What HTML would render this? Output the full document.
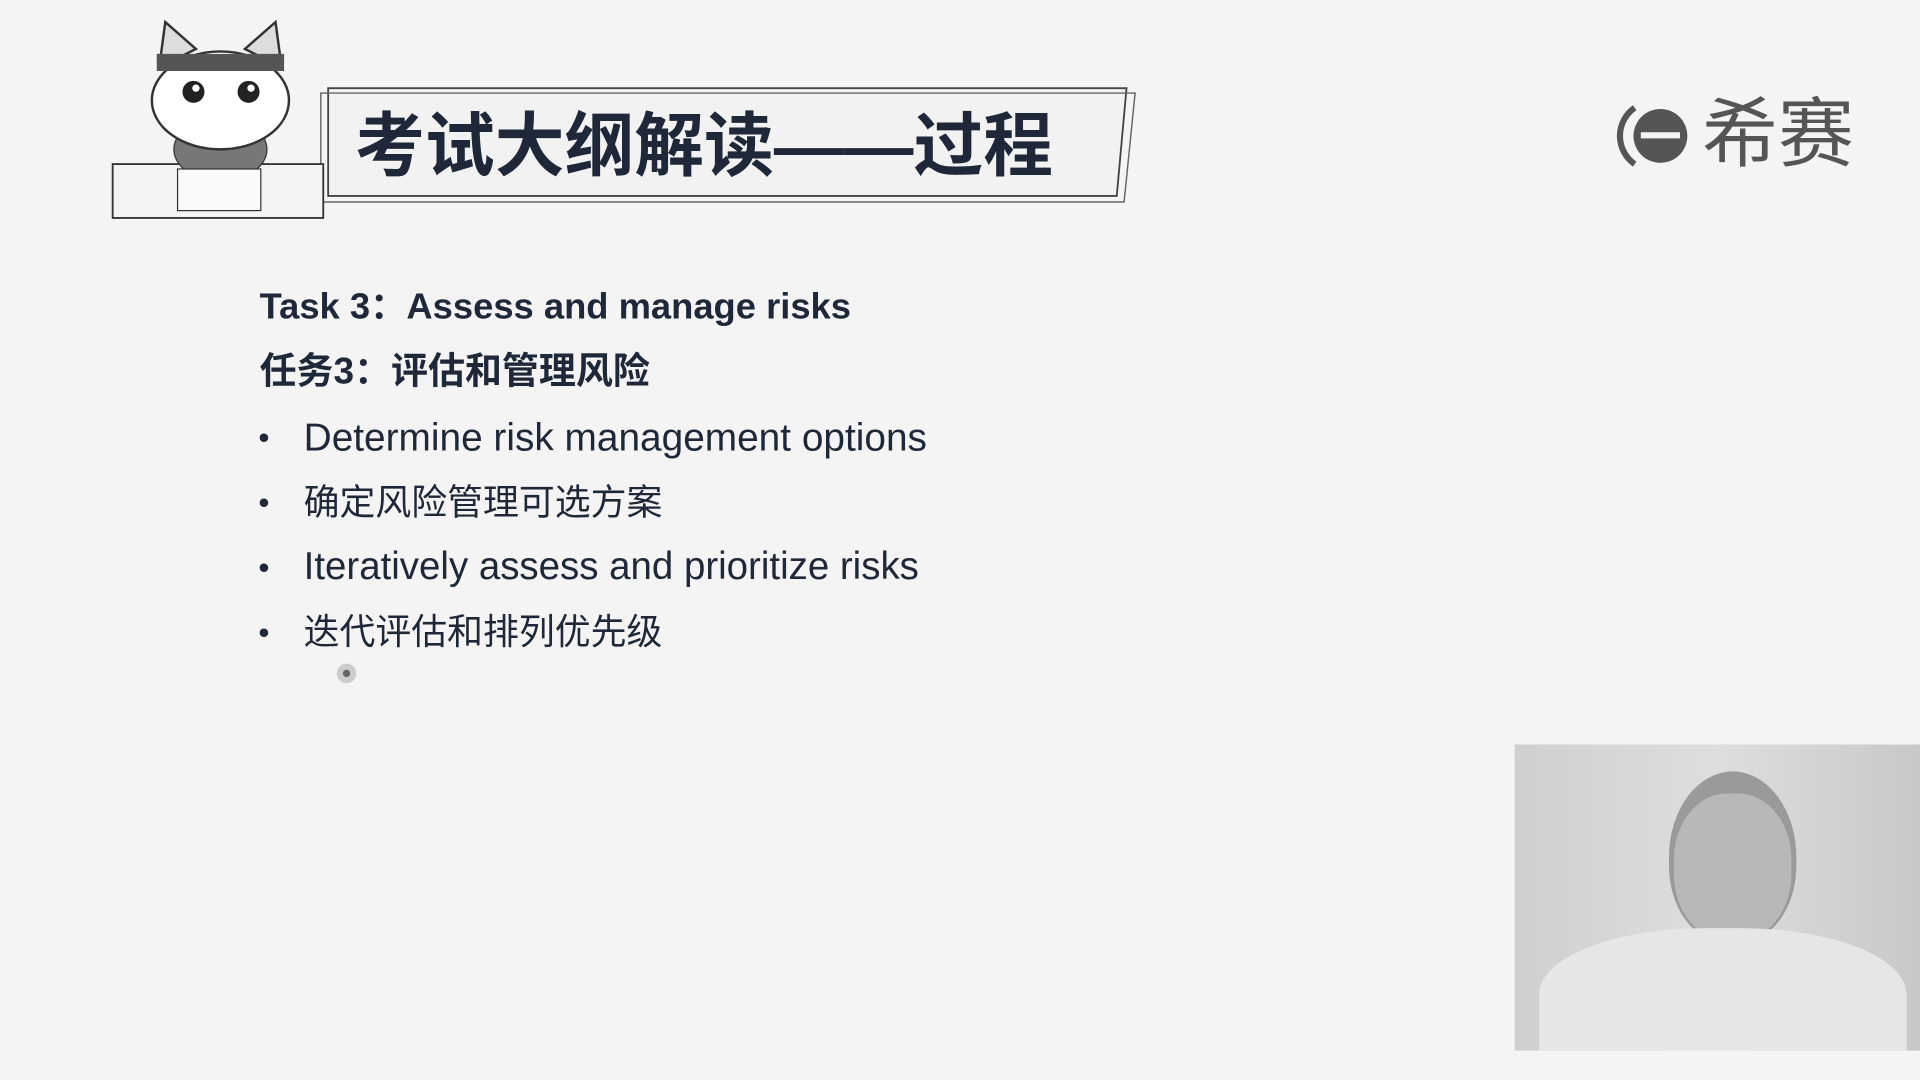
<!DOCTYPE html>
<html><head><meta charset="utf-8"><style>
html,body{margin:0;padding:0;width:1920px;height:1080px;overflow:hidden;background:#f4f4f4}
#s{position:absolute;left:0;top:0;width:1568px;height:882px;transform:scale(1.22449);transform-origin:0 0;font-family:"Liberation Sans","Noto Sans CJK SC",sans-serif;color:#1e2838}
.t{position:absolute;white-space:nowrap;line-height:30px}
.d{position:absolute;left:211px;font-size:26px;line-height:30px}
</style></head><body><div id="s">
<svg width="1568" height="882" style="position:absolute;left:0;top:0">
<polygon points="268,72 920,72 912,160 268,160" fill="#f2f2f2" stroke="#444" stroke-width="1.5"/>
<polygon points="262,76 927,76 918,165 262,165" fill="none" stroke="#666" stroke-width="1.2"/>
<rect x="92" y="134" width="172" height="44" fill="#f4f4f4" stroke="#333" stroke-width="1.5"/>
<ellipse cx="180" cy="122" rx="38" ry="26" fill="#777" stroke="#333"/>
<rect x="145" y="138" width="68" height="34" fill="#fafafa" stroke="#333"/>
<ellipse cx="180" cy="82" rx="56" ry="40" fill="#fff" stroke="#333" stroke-width="2"/>
<polygon points="130,55 135,18 160,40" fill="#ddd" stroke="#333" stroke-width="2"/>
<polygon points="230,55 225,18 200,40" fill="#ddd" stroke="#333" stroke-width="2"/>
<rect x="128" y="44" width="104" height="14" fill="#555"/>
<circle cx="158" cy="75" r="9" fill="#222"/><circle cx="203" cy="75" r="9" fill="#222"/>
<circle cx="160" cy="72" r="3" fill="#fff"/><circle cx="205" cy="72" r="3" fill="#fff"/>
<circle cx="283" cy="550" r="8" fill="#ccc"/><circle cx="283" cy="550" r="3" fill="#666"/>
<path d="M1335,88 A28,28 0 0 0 1335,134" fill="none" stroke="#555" stroke-width="5"/>
<circle cx="1356" cy="111" r="22" fill="#555"/>
<rect x="1340" y="108" width="32" height="5" fill="#f4f4f4"/>
</svg>
<div class="t" style="left:290px;top:85px;line-height:70px;font-size:57px;font-weight:bold;color:#1e2838">考试大纲解读——过程</div>
<div class="t" style="left:1390px;top:78px;line-height:66px;font-size:62px;color:#555">希赛</div>
<div class="t" style="left:212px;top:236px;font-size:29.7px;font-weight:600">Task 3：Assess and manage risks</div>
<div class="t" style="left:212px;top:289px;font-size:30.2px;font-weight:600">任务3：评估和管理风险</div>
<div class="d" style="top:342px">•</div><div class="t" style="left:248px;top:342px;font-size:31.7px">Determine risk management options</div>
<div class="d" style="top:395px">•</div><div class="t" style="left:248px;top:396px;font-size:29.3px">确定风险管理可选方案</div>
<div class="d" style="top:448px">•</div><div class="t" style="left:248px;top:448px;font-size:31.4px">Iteratively assess and prioritize risks</div>
<div class="d" style="top:501px">•</div><div class="t" style="left:248px;top:502px;font-size:29.3px">迭代评估和排列优先级</div>
<div style="position:absolute;left:1237px;top:608px;width:331px;height:250px;overflow:hidden;background:linear-gradient(90deg,#cfcfcf,#dedede 50%,#c8c8c8)">
<div style="position:absolute;left:126px;top:22px;width:104px;height:140px;border-radius:50% 50% 45% 45%;background:#9a9a9a"></div>
<div style="position:absolute;left:130px;top:40px;width:96px;height:120px;border-radius:45%;background:#b8b8b8"></div>
<div style="position:absolute;left:20px;top:150px;width:300px;height:120px;border-radius:45% 45% 0 0;background:#e6e6e6"></div>
</div>
</div></body></html>
